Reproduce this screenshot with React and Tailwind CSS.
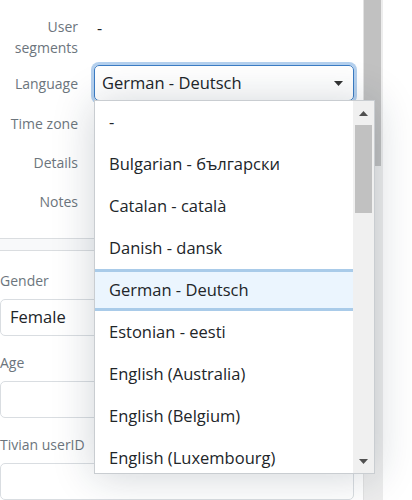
import React from "react";

// Options shown in the open language list
const LANGUAGES = [
  "-",
  "Bulgarian - български",
  "Catalan - català",
  "Danish - dansk",
  "German - Deutsch",
  "Estonian - eesti",
  "English (Australia)",
  "English (Belgium)",
  "English (Luxembourg)",
];

function InfoRow({ label, rowClass, children }) {
  return (
    <div className={`flex gap-[16px] ${rowClass}`}>
      <div className="w-[78px] shrink-0 text-right text-[14px] leading-[21px] text-[#6c757d]">
        {label}
      </div>
      <div className="w-[260px] text-base text-[#212529]">{children}</div>
    </div>
  );
}

function Field({ label, value }) {
  return (
    <div className="flex flex-col">
      <label className="mb-[8px] text-[14px] leading-[21px] text-[#6c757d]">{label}</label>
      <div className="flex h-[37px] w-[354px] items-center rounded-[5px] border border-[#d9dde1] bg-white px-[9px] text-[16.5px] text-[#212529]">
        {value}
      </div>
    </div>
  );
}

export default function App() {
  return (
    <div className="relative h-[500px] w-[412px] overflow-hidden bg-white font-['Open_Sans','Noto_Sans',sans-serif]">
      <div className="flex h-full">
        {/* main form column */}
        <div className="w-[363px] shrink-0">
          <div className="flex flex-col pt-[16px]">
            <InfoRow label={<>User<br />segments</>} rowClass="h-[49px] items-start">
              <span className="pl-[3px] leading-[19px]">-</span>
            </InfoRow>
            <InfoRow label="Language" rowClass="h-[36px] items-center">
              <div className="relative flex h-[36px] w-[260px] items-center rounded-[5px] border border-[#3b7cc4] pl-[7px] text-[16.5px] shadow-[0_0_0_3px_#b4d0ee]">
                German - Deutsch
                <svg className="absolute right-[10px] top-[15px]" width="9" height="5" viewBox="0 0 9 5">
                  <path d="M0 0h9L4.5 5z" fill="#333" />
                </svg>
              </div>
            </InfoRow>
            <InfoRow label="Time zone" rowClass="mt-[3px] h-[39px] items-center" />
            <InfoRow label="Details" rowClass="h-[39px] items-center" />
            <InfoRow label="Notes" rowClass="h-[39px] items-center" />
          </div>

          {/* section separator */}
          <div className="mt-[17px] h-[13px] border-y border-[#dadde0] bg-[#f8f9fa]" />

          <div className="flex flex-col gap-[16px] pt-[19px]">
            <Field label="Gender" value="Female" />
            <Field label="Age" value="" />
            <Field label="Tivian userID" value="" />
          </div>
        </div>

        {/* page scrollbar */}
        <div className="w-[20px] shrink-0 border-l border-[#e2e2e2] bg-[#ededed] pr-[2px]">
          <div className="h-[166px] w-full bg-[#c1c1c1]" />
        </div>
        <div className="flex-1 bg-white" />
      </div>

      {/* open native select list */}
      <div className="absolute left-[94px] top-[100px] flex h-[374px] w-[281px] border border-[#c9cdd1] bg-white shadow-[0_2px_40px_rgba(20,40,60,0.2)]">
        <div className="flex-1 overflow-hidden">
          {LANGUAGES.map((lang) =>
            lang === "German - Deutsch" ? (
              <div
                key={lang}
                className="flex h-[42px] items-center border-y-[3px] border-[#a9cbe9] bg-[#ebf5fe] pl-[14px] text-[16.5px] text-[#212529]"
              >
                {lang}
              </div>
            ) : (
              <div key={lang} className="flex h-[42px] items-center pl-[14px] text-[16.5px] text-[#212529]">
                {lang}
              </div>
            )
          )}
        </div>
        <div className="relative w-[21px] shrink-0 bg-[#f0f0f0]">
          <svg className="absolute left-[6px] top-[10px]" width="9" height="5" viewBox="0 0 9 5">
            <path d="M4.5 0L9 5H0z" fill="#505050" />
          </svg>
          <div className="absolute left-[2px] top-[24px] h-[88px] w-[17px] bg-[#c1c1c1]" />
          <svg className="absolute bottom-[9px] left-[6px]" width="9" height="5" viewBox="0 0 9 5">
            <path d="M0 0h9L4.5 5z" fill="#505050" />
          </svg>
        </div>
      </div>
    </div>
  );
}
